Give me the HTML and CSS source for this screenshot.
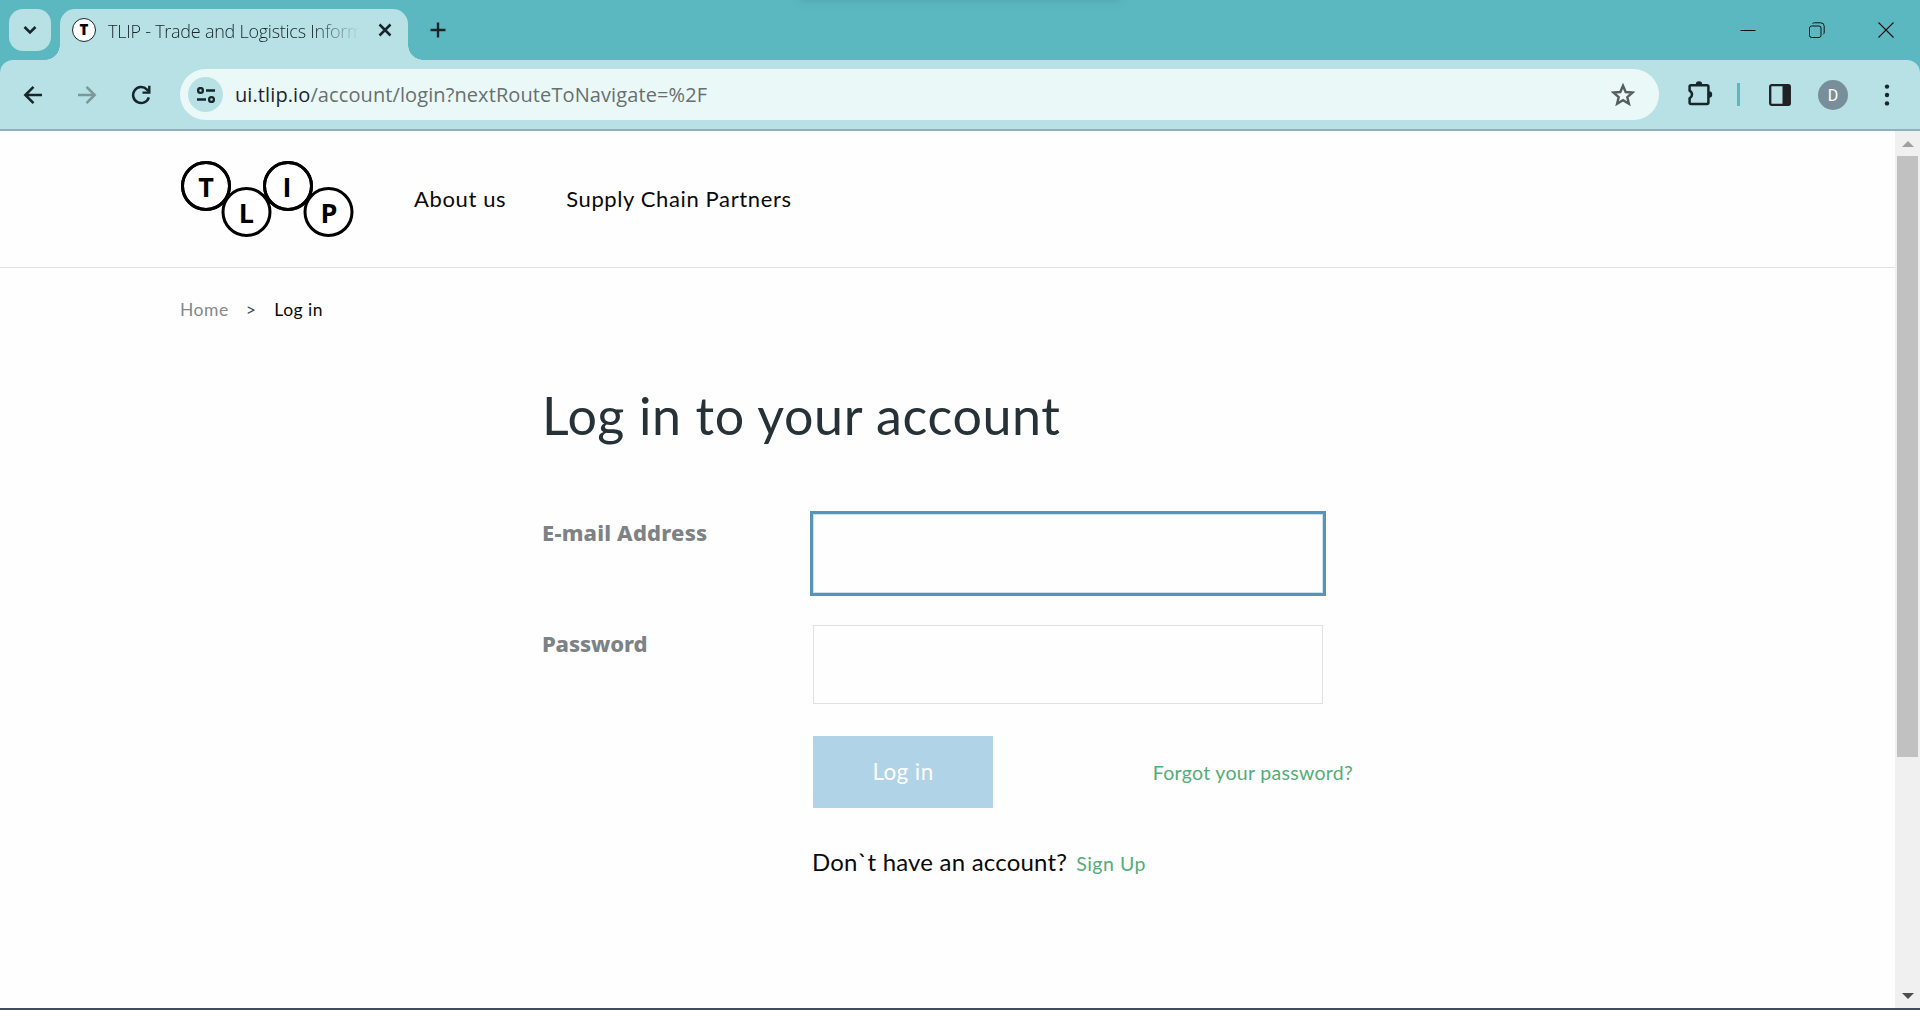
FILE: index.html
```
<!DOCTYPE html>
<html lang="en">
<head>
<meta charset="utf-8">
<title>TLIP - Trade and Logistics Information Pipeline</title>
<link rel="stylesheet" href="styles.css">
</head>
<body>
<div class="browser">
  <div class="tabstrip">
    <div class="tab-search"><svg width="42" height="42" viewBox="0 0 42 42"><path d="M15.500 18l5.500 5.500 5.500-5.500" fill="none" stroke="#17262a" stroke-width="2.600"/></svg></div>
    <div class="tab">
      <svg class="favicon" width="24" height="24" viewBox="0 0 24 24"><circle cx="12" cy="12" r="11.500" fill="#fff" stroke="#17262a"/><text class="favicon-letter" x="12" y="17" text-anchor="middle">T</text></svg>
      <span class="tab-title">TLIP - Trade and Logistics Inform</span>
      <svg class="tab-close" width="14" height="14" viewBox="0 0 14 14"><path d="M1.500 1.500l11 11M12.500 1.500l-11 11" stroke="#17262a" stroke-width="2.500"/></svg>
    </div>
    <svg class="new-tab" width="16" height="16" viewBox="0 0 16 16"><path d="M8 .5v15M.5 8h15" stroke="#17262a" stroke-width="2.400"/></svg>
    <div class="window-buttons">
      <svg width="16" height="16" viewBox="0 0 16 16"><path d="M.5 8.500h15" stroke="#111"/></svg>
      <svg width="16" height="16" viewBox="0 0 16 16" fill="none" stroke="#111"><rect x=".5" y="4" width="11.500" height="11.500" rx="2"/><path d="M3.500 1.500Q4 .8 5.500.8h6.200q3.500 0 3.500 3.500v6q0 1.400-1 2"/></svg>
      <svg width="16" height="16" viewBox="0 0 16 16"><path d="M.5.500l15 15M15.500.500l-15 15" stroke="#111" stroke-width="1.100"/></svg>
    </div>
    <div class="top-shadow"></div>
  </div>

  <div class="toolbar">
    <svg class="nav-icon" width="20" height="20" viewBox="0 0 20 20"><path d="M19 10H3M10.500 1.800L2.300 10l8.200 8.200" fill="none" stroke="#17262a" stroke-width="2.500"/></svg>
    <svg class="nav-icon" width="20" height="20" viewBox="0 0 20 20"><path d="M1 10h16M9.500 1.800l8.200 8.200-8.200 8.200" fill="none" stroke="#7b9799" stroke-width="2.500"/></svg>
    <svg class="nav-icon" width="20" height="20" viewBox="0 0 20 20"><path d="M17.800 12.300A8 8 0 1 1 16 4.600l1.500 1.600" fill="none" stroke="#17262a" stroke-width="2.500"/><path d="M19.500.800v8h-8v-2.400h5.600V.800z" fill="#17262a"/></svg>
    <div class="omnibox">
      <div class="site-info"><svg width="20" height="16" viewBox="0 0 20 16" fill="none" stroke="#17262a" stroke-width="2.300"><circle cx="4.500" cy="3.500" r="2.400"/><path d="M10 3.500h9M1 12.500h9"/><circle cx="15.500" cy="12.500" r="2.400"/></svg></div>
      <span class="url"><span class="host">ui.tlip.io</span>/account/login?nextRouteToNavigate=%2F</span>
      <svg class="star" width="24" height="24" viewBox="0 0 24 24"><path d="M12 2.700l2.700 6.300 6.800.600-5.200 4.500 1.600 6.700L12 17.200l-5.900 3.600 1.600-6.700-5.200-4.500 6.800-.600z" fill="none" stroke="#555d5e" stroke-width="2.400"/></svg>
    </div>
    <svg class="puzzle" width="26" height="26" viewBox="0 0 26 26"><path d="M4 5.200h16q1.400 0 1.400 1.400v16q0 1.400-1.400 1.400H4q-1.400 0-1.400-1.400v-4.200q2.400-1.400 2.400-3.900t-2.400-3.900v-4Q2.600 5.200 4 5.200z" fill="none" stroke="#17262a" stroke-width="2.500"/><path d="M8.800 4.500a3.200 3.200 0 0 1 6.400 0zM22 11.300a3.200 3.200 0 0 1 0 6.400z" fill="#17262a"/></svg>
    <div class="separator"></div>
    <svg class="panel-icon" width="22" height="22" viewBox="0 0 22 22"><rect x="1.200" y="1.200" width="19.600" height="19.600" rx="1.500" fill="none" stroke="#202124" stroke-width="2.300"/><path d="M13.500 1h7v20h-7z" fill="#202124"/></svg>
    <div class="avatar">D</div>
    <svg class="menu-icon" width="6" height="24" viewBox="0 0 6 24" fill="#17262a"><circle cx="3" cy="3.600" r="2.200"/><circle cx="3" cy="12" r="2.200"/><circle cx="3" cy="20.400" r="2.200"/></svg>
  </div>

  <div class="viewport">
    <main class="page">
      <header class="site-header">
        <svg class="logo" width="174" height="76" viewBox="0 0 174 76">
          <g fill="#fff" stroke="#000" stroke-width="3"><circle cx="26" cy="25" r="23.500"/><circle cx="108" cy="25" r="23.500"/><circle cx="66.500" cy="51" r="23.500"/><circle cx="148.500" cy="51" r="23.500"/></g>
          <g fill="none" stroke="#000" stroke-width="3"><circle cx="26" cy="25" r="23.500"/><circle cx="108" cy="25" r="23.500"/></g>
          <g class="logo-letters" text-anchor="middle"><text x="26" y="36">T</text><text x="66.500" y="62">L</text><text x="107" y="36">I</text><text x="149" y="62">P</text></g>
        </svg>
        <nav class="site-nav"><a class="nav-about">About us</a><a class="nav-partners">Supply Chain Partners</a></nav>
      </header>
      <div class="breadcrumb"><span class="crumb-home">Home</span><span class="crumb-sep">&gt;</span><span>Log in</span></div>
      <section class="login">
        <h1>Log in to your account</h1>
        <div class="field"><label for="email">E-mail Address</label><input class="input focused" id="email" type="text"></div>
        <div class="field"><label class="label-password" for="password">Password</label><input class="input" id="password" type="password"></div>
        <div class="actions"><button class="submit" type="button">Log in</button><a class="forgot">Forgot your password?</a></div>
        <p class="signup">Don`t have an account?<a class="signup-link">Sign Up</a></p>
      </section>
    </main>
    <div class="scrollbar">
      <svg class="arrow-up" width="12" height="6" viewBox="0 0 12 6"><path d="M6 0l6 6H0z" fill="#a0a0a0"/></svg>
      <div class="thumb"></div>
      <svg class="arrow-down" width="12" height="6" viewBox="0 0 12 6"><path d="M0 0h12L6 6z" fill="#4d4d4d"/></svg>
    </div>
  </div>
  <div class="taskbar-edge"></div>
</div>
</body>
</html>
```
FILE: styles.css
```
* { box-sizing: border-box; }
body { margin: 0; background: #fff; font-family: Lato, "Noto Sans", sans-serif; }
svg { display: block; flex: none; }
.browser { width: 1920px; height: 1010px; display: flex; flex-direction: column; overflow: hidden; background: #5bb8c1; }

/* Tab strip */
.tabstrip { position: relative; height: 60px; flex: none; display: flex; align-items: flex-start; padding: 9px 26px 0 9px; }
.tab-search { width: 42px; height: 42px; border-radius: 14px; background: #b7e1e4; }
.tab { position: relative; width: 348px; height: 51px; margin-left: 9px; padding: 0 17px 9px 12px; display: flex; align-items: center; border-radius: 15px 15px 0 0; background: #b7e1e4; }
.tab::before, .tab::after { content: ""; position: absolute; bottom: 0; width: 15px; height: 15px; }
.tab::before { left: -15px; background: radial-gradient(circle at 0 0, transparent 14.5px, #b7e1e4 15px); }
.tab::after { right: -15px; background: radial-gradient(circle at 100% 0, transparent 14.5px, #b7e1e4 15px); }
.favicon-letter { font: 800 15px "Open Sans", sans-serif; }
.tab-title { width: 265px; flex: none; margin: 2px 5px 0 12px; white-space: nowrap; font: 360 18px/26px "Open Sans", sans-serif; letter-spacing: -.25px; color: #17262a; -webkit-mask-image: linear-gradient(90deg, #000 205px, transparent 252px); mask-image: linear-gradient(90deg, #000 205px, transparent 252px); }
.new-tab { margin: 13px 0 0 22px; }
.window-buttons { display: flex; gap: 53px; margin: 13px 0 0 auto; }
.top-shadow { position: absolute; left: 800px; top: -12px; width: 320px; height: 10px; box-shadow: 0 0 12px rgba(50, 90, 100, .35); }

/* Toolbar */
.toolbar { height: 71px; flex: none; display: flex; align-items: center; padding: 0 30px 0 23px; border-bottom: 2px solid #91b3b7; border-radius: 13px 13px 0 0; background: #b7e1e4; }
.nav-icon { margin-right: 34px; }
.omnibox { width: 1479px; height: 51px; margin-left: -5px; padding: 0 24px 0 8px; display: flex; align-items: center; border-radius: 26px; background: #ebf8f8; }
.site-info { width: 35px; height: 35px; display: grid; place-items: center; border-radius: 50%; background: #b7e1e4; }
.url { margin-left: 12px; font: 380 20px/30px "Open Sans", sans-serif; letter-spacing: .1px; color: #66706f; }
.host { color: #1b2330; }
.star { margin-left: auto; }
.puzzle { margin: 0 0 3px 28px; }
.separator { width: 3px; height: 23px; margin-left: 24px; background: #5bb8c1; }
.panel-icon { margin-left: 29px; }
.avatar { width: 30px; height: 30px; margin-left: 27px; border-radius: 50%; background: #788f9b; color: #fff; text-align: center; font: 400 16px/31px Roboto, sans-serif; }
.menu-icon { margin-left: 36px; }

/* Page */
.viewport { height: 877px; flex: none; display: flex; }
.page { flex: 1; background: #fefefe; color: #0a0a0a; }
.site-header { height: 137px; display: flex; align-items: center; padding-left: 180px; border-bottom: 1px solid #dfe1e2; }
.site-nav { display: flex; gap: 60px; margin-left: 60px; font-size: 22px; line-height: 30px; white-space: nowrap; letter-spacing: .62px; }
.logo-letters { font: 700 27px "Open Sans", sans-serif; }
.breadcrumb { display: flex; padding: 30px 0 0 180px; font-size: 17.5px; line-height: 24px; letter-spacing: .5px; }
.crumb-home { color: #84898c; }
.crumb-sep { margin: 0 18px 0 17px; color: #43494c; }
.login { width: 812px; margin-left: 542px; padding-top: 61px; }
h1 { margin: 0; font-size: 52px; line-height: 64px; font-weight: 400; letter-spacing: .6px; color: #273238; }
.field { height: 111px; display: flex; }
.field:first-of-type { margin-top: 67px; }
label { width: 271px; padding-top: 3px; font: 800 22px/30px "Noto Sans", sans-serif; letter-spacing: .2px; color: #7c8285; }
.label-password { letter-spacing: -.15px; }
.input { width: 510px; height: 79px; padding: 0 16px; border: 1px solid #dfe1e2; border-radius: 0; background: #fefefe; font: inherit; }
.focused { border-color: #c9e4f0; outline: 3px solid #5994b8; }
.actions { display: flex; align-items: center; margin-left: 271px; width: 540px; }
.submit { width: 180px; height: 72px; padding: 0; border: 0; background: #b0d3e7; color: #fff; font: 400 22.5px/30px Lato, sans-serif; letter-spacing: .4px; }
.forgot { margin-left: auto; color: #54ad76; font-size: 19.5px; letter-spacing: .3px; white-space: nowrap; }
.signup { margin: 35px 0 0 270px; font-size: 24px; line-height: 38px; letter-spacing: .2px; white-space: nowrap; }
.signup-link { margin-left: 9px; color: #54ad76; font-size: 19.5px; letter-spacing: .5px; }

/* Scrollbar */
.scrollbar { width: 25px; display: flex; flex-direction: column; align-items: center; padding: 10px 0 9px; background: #f0f0f0; }
.thumb { width: 21px; height: 601px; margin-top: 9px; background: #c1c1c1; }
.arrow-down { margin-top: auto; }
.taskbar-edge { height: 2px; background: #434c5b; }
```
